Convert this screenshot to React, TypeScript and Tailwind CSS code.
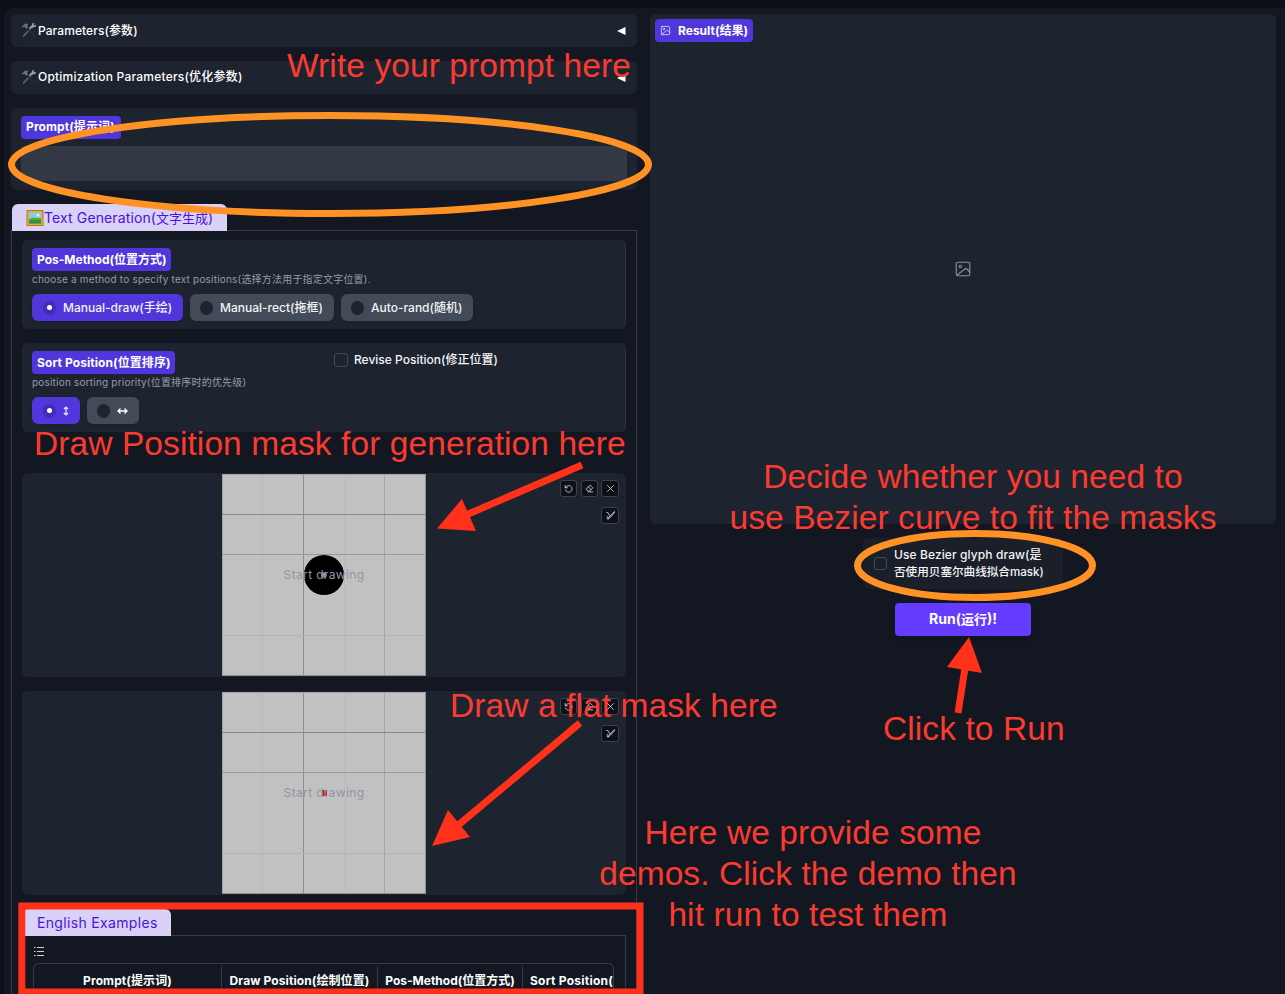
import React from "react";

const GRID_V: [number, string][] = [[0.5, "#a3a3a3"], [40.5, "#b8b8b8"], [81.5, "#8e8e8e"], [122.5, "#bbbbbb"], [162.5, "#a6a6a6"], [203.5, "#8f8f8f"]];
const GRID_H: [number, string][] = [[0.5, "#a3a3a3"], [40.5, "#8a8a8a"], [80.5, "#999999"], [161.5, "#b3b3b3"], [201.5, "#8a908e"]];

function Tools() {
  return (
    <svg width="16" height="16" viewBox="0 0 16 16" className="-mt-px block shrink-0">
      <path d="M2.500 14 9.500 6.600" stroke="#6a5f58" strokeWidth="1.700" strokeLinecap="round" />
      <path d="M6 6.400 13.600 13.500" stroke="#2b2b2d" strokeWidth="1.700" strokeLinecap="round" />
      <path d="M.8 4.400 4.600 1.600l3.200.3-1.600 1.200.6 2.300-1.600 1.400-2-2.200-1.200 1z" fill="#6d7377" />
      <path d="M8.700 7 7.800 6 10.800 3.200l.3-1.700L13.300.8 12.500 2.400l1 1 1.800-.8-.7 2.100-2 .5z" fill="#9aa0a3" />
    </svg>
  );
}

function Picture() {
  return (
    <svg width="18" height="18" viewBox="0 0 18 18" className="block shrink-0">
      <rect x=".5" y="1" width="17" height="16" fill="#b07d1a" />
      <rect x="1.500" y="2" width="15" height="14" fill="#e0ad3d" />
      <rect x="3" y="3.500" width="12" height="11" fill="#7fd0ea" />
      <path d="M3 10c3-2 6-1 12-1v5.500H3z" fill="#58a83c" />
      <path d="M3 12c4-2 8 0 12-1v3.500H3z" fill="#3b8d35" />
      <circle cx="12" cy="6" r="1.500" fill="#f7f3c0" />
    </svg>
  );
}

function ImageIcon({ className }: { className: string }) {
  return (
    <svg viewBox="0 0 24 24" fill="none" stroke="currentColor" strokeWidth="1.500" strokeLinecap="round" strokeLinejoin="round" className={className}>
      <rect x="3" y="3" width="18" height="18" rx="2" />
      <circle cx="8.500" cy="8.500" r="1.500" />
      <path d="M4 20 16 11l5 5" />
    </svg>
  );
}

function Accordion({ title, spacing }: { title: string; spacing: string }) {
  return (
    <div className="flex h-[33px] items-center rounded-md bg-[#1e242f] px-[10px]">
      <Tools />
      <span className={`ml-px text-[12px] font-medium text-white ${spacing}`}>{title}</span>
      <svg width="9" height="8" viewBox="0 0 9 8" className="mr-px ml-auto"><path d="M0 4 8.500 0v8z" fill="#fff" /></svg>
    </div>
  );
}

function Tag({ children, className }: { children: React.ReactNode; className: string }) {
  return <div className={`flex h-[23px] items-center rounded bg-[#4f37dc] pl-[5px] text-[12px] font-bold whitespace-nowrap text-white ${className}`}>{children}</div>;
}

function Radio({ on, children, className }: { on?: boolean; children: React.ReactNode; className: string }) {
  return (
    <div className={`flex h-[27px] items-center rounded-md text-[12px] font-medium whitespace-nowrap text-gray-100 shadow-sm ${on ? "bg-[#4f37dc] pl-[11px]" : "bg-[#424b57] pl-[10px]"} ${className}`}>
      <span className={`mr-[7px] flex h-[14px] w-[13px] shrink-0 items-center justify-center rounded-full ${on ? "bg-[#432bb8]" : "bg-[#1e242f]"}`}>
        {on && <span className="size-[5px] rounded-full bg-white" />}
      </span>
      {children}
    </div>
  );
}

function ToolButton({ children, className }: { children: React.ReactNode; className: string }) {
  return (
    <div className={`flex h-[17px] items-center justify-center rounded-[3px] border border-[#3b424e] bg-[#0d1017] text-[#d5d7db] ${className}`}>
      <svg width="9" height="9" viewBox="0 0 24 24" fill="none" stroke="currentColor" strokeWidth="2.200" strokeLinecap="round" strokeLinejoin="round">{children}</svg>
    </div>
  );
}

function Canvas({ brush }: { brush: "round" | "small" }) {
  return (
    <div className="relative flex h-[204px] justify-center rounded-md bg-[#1e242f]">
      <svg width="204" height="202" viewBox="0 0 204 202" className="mt-px block">
        <rect width="204" height="202" fill="#c1c1c1" />
        {GRID_V.map(([x, c]) => <path key={x} d={`M${x} 0V202`} stroke={c} />)}
        {GRID_H.map(([y, c]) => <path key={y} d={`M0 ${y}H204`} stroke={c} />)}
        {brush === "round" ? <circle cx="102" cy="101" r="20" fill="#000" /> : <rect x="100" y="98" width="5" height="6" fill="#c8201c" />}
        {brush === "round" && <circle cx="102" cy="101" r="2.800" fill="#8d8f96" />}
      </svg>
      <div className="absolute inset-0 flex items-center justify-center text-[12px] tracking-[0.35px] text-[#9095a3]">Start drawing</div>
      <div className="absolute top-[7px] right-[7px] flex flex-col items-end gap-[10px]">
        <div className="flex gap-[4px]">
          <ToolButton className="w-[17px]"><path d="M3 4v6h6" /><path d="M4 10a9 9 0 1 1 0 6" /></ToolButton>
          <ToolButton className="w-[17px]"><path d="M4 13 14 3l7 7-9 9H8l-5-5zM9 8l7 7M8 21h13" /></ToolButton>
          <ToolButton className="-ml-px w-[18px]"><path d="M4 4l16 16M20 4 4 20" /></ToolButton>
        </div>
        <ToolButton className="w-[18px]"><path d="M22 2 12 12l2 2 8-9zM11 13l-5 6 1 2 7-7M2 4h3l3 6 2 1M5 14l-2 3v4h4" /></ToolButton>
      </div>
    </div>
  );
}

function Note({ children, className }: { children: React.ReactNode; className: string }) {
  return <div className={`absolute text-[33.500px] leading-[41px] tracking-[0.09px] whitespace-nowrap text-[#fb3b30] [font-family:'Liberation_Sans',Arial,sans-serif] ${className}`}>{children}</div>;
}

export default function App() {
  return (
    <div className="relative h-[994px] w-[1285px] overflow-hidden bg-[#0d1017] pt-2 pl-1 [font-family:Inter,'Noto_Sans_CJK_SC',sans-serif]">
      <main className="flex h-[986px] gap-[13px] rounded-tl-lg bg-[#131721] pt-[6px] pl-[7px]">
        <section className="flex w-[626px] flex-col">
          <div className="flex flex-col gap-[14px]">
            <Accordion title="Parameters(参数)" spacing="tracking-[0.08px]" />
            <Accordion title="Optimization Parameters(优化参数)" spacing="-mt-[2px] tracking-[0.22px]" />
            <div className="h-[82px] rounded-md bg-[#1e242f] px-[10px] pt-2">
              <Tag className="w-[100px] pb-px tracking-[0.1px]">Prompt(提示词)</Tag>
              <div className="mt-[7px] h-[35px] rounded-sm bg-[#323844]" />
            </div>
          </div>
          <div className="z-10 mt-[14px] ml-px flex h-[27px] w-[215px] items-center rounded-t-md bg-[#d9d1f6] pl-[14px] text-[#4b12df]">
            <Picture />
            <span className="text-[14px] tracking-[0.12px] whitespace-nowrap">Text Generation(<span className="text-[13px] tracking-normal">文字生成</span>)</span>
          </div>
          <div className="-mt-px flex h-[764px] flex-col border border-b-0 border-[#353b47] px-[10px] pt-[9px]">
            <div className="h-[89px] rounded-md border-r border-[#2d3440] bg-[#1e242f] px-[10px] pt-2">
              <Tag className="w-[139px]">Pos-Method(位置方式)</Tag>
              <p className="mt-px h-[15px] text-[10px] leading-[14px] tracking-[0.2px] whitespace-nowrap text-[#969ba6]">choose a method to specify text positions(选择方法用于指定文字位置).</p>
              <div className="mt-[7px] flex gap-[7px]">
                <Radio on className="w-[151px]">Manual-draw(手绘)</Radio>
                <Radio className="w-[144px]">Manual-rect(拖框)</Radio>
                <Radio className="w-[132px]">Auto-rand(随机)</Radio>
              </div>
            </div>
            <div className="mt-[14px] flex h-[89px] rounded-md border-r border-[#2d3440] bg-[#1e242f] px-[10px] pt-2">
              <div className="w-[302px]">
                <Tag className="w-[143px] tracking-[0.08px]">Sort Position(位置排序)</Tag>
                <p className="mt-px h-[15px] text-[10px] leading-[14px] tracking-[0.2px] whitespace-nowrap text-[#969ba6]">position sorting priority(位置排序时的优先级)</p>
                <div className="mt-[7px] flex gap-[7px]">
                  <Radio on className="w-[48px]">
                    <svg width="6" height="10" viewBox="0 0 6 10" fill="none" stroke="#e8e6fa" strokeWidth="1.200"><path d="M3 1v8M1 3l2-2 2 2M1 7l2 2 2-2" /></svg>
                  </Radio>
                  <Radio className="w-[52px]">
                    <svg width="11" height="8" viewBox="0 0 11 8" fill="none" stroke="#fff" strokeWidth="1.300"><path d="M1 4h9M3.500 1.500 1 4l2.500 2.500M7.500 1.500 10 4 7.500 6.500" /></svg>
                  </Radio>
                </div>
              </div>
              <div className="flex h-[18px] items-center text-[12px] font-medium text-gray-100">
                <span className="mr-[6px] size-[14px] rounded-[3px] border border-[#434a56]" />
                <span className="whitespace-nowrap">Revise Position(修正位置)</span>
              </div>
            </div>
            <div className="mt-[41px] flex flex-col gap-[14px]">
              <Canvas brush="round" />
              <Canvas brush="small" />
            </div>
            <div className="z-10 mt-[14px] flex h-[27px] w-[149px] items-center rounded-t-md bg-[#d9d1f6] pl-[15px] text-[14px] tracking-[0.33px] whitespace-nowrap text-[#4b12df]">English Examples</div>
            <div className="-mt-px h-[59px] border border-b-0 border-[#353b47] pt-[11px] pr-[11px] pl-[10px]">
              <svg width="11" height="9" viewBox="0 0 11 9" stroke="#d0d2d6" className="block"><path d="M1 .5h1.500M1 4.500h1.500M1 8.500h1.500M4 .5h7M4 4.500h7M4 8.500h7" /></svg>
              <div className="mt-[7px] flex h-[31px] items-stretch overflow-hidden rounded-t-md border border-b-0 border-[#353b47] pt-[2px] text-[12px] leading-[30px] font-bold whitespace-nowrap text-white">
                <div className="w-[188px] shrink-0 border-r border-[#353b47] text-center tracking-[0.1px]">Prompt(提示词)</div>
                <div className="w-[156px] shrink-0 border-r border-[#353b47] text-center tracking-[0.1px]">Draw Position(绘制位置)</div>
                <div className="w-[145px] shrink-0 border-r border-[#353b47] text-center">Pos-Method(位置方式)</div>
                <div className="pl-[7px] tracking-[0.25px]">Sort Position(</div>
              </div>
            </div>
          </div>
        </section>

        <section className="flex w-[626px] flex-col items-center">
          <div className="relative flex h-[510px] w-full items-center justify-center rounded-md bg-[#1e242f]">
            <div className="absolute top-[5px] left-[5px] flex h-[23px] w-[98px] items-center rounded bg-[#4f37dc] pl-[5px] text-[12px] font-bold whitespace-nowrap text-white">
              <ImageIcon className="mr-[7px] size-[11px] shrink-0" />Result(结果)
            </div>
            <ImageIcon className="size-[18px] text-[#8b8f98]" />
          </div>
          <div className="mt-[14px] flex h-[51px] w-[200px] items-center rounded-md bg-[#1a1f29] pl-[11px] text-[12px] leading-[17px] font-medium text-gray-100">
            <span className="mr-[7px] size-[13px] shrink-0 rounded-[3px] border border-[#434a56]" />
            <span className="-mt-px whitespace-nowrap"><span className="tracking-[0.1px]">Use Bezier glyph draw(是</span><br /><span className="text-[11.600px]">否使用贝塞尔曲线拟合mask)</span></span>
          </div>
          <button className="mt-[14px] h-[33px] w-[136px] rounded-sm bg-[#643bff] pb-px text-[14px] font-bold text-white shadow-md">Run(<span className="text-[13px]">运行</span>)!</button>
        </section>
      </main>

      <svg width="1285" height="994" viewBox="0 0 1285 994" fill="none" className="pointer-events-none absolute inset-0 z-20">
        <g stroke="#ff9224" strokeWidth="7">
          <ellipse cx="330" cy="164.500" rx="318.500" ry="49" />
          <ellipse cx="975" cy="565.500" rx="117.500" ry="32" />
        </g>
        <rect x="21.800" y="906" width="618.200" height="86" stroke="#ff311b" strokeWidth="7" />
        <path d="M582 465 466 515M580 723 456 827M958 713 965 668" stroke="#ff311b" strokeWidth="7" />
        <path d="M437 528.500 462 499l14 32zM432 846l16-36 22 27zM969 637l-22 30 35 6z" fill="#ff311b" />
      </svg>
      <div className="pointer-events-none absolute inset-0 z-30">
        <Note className="top-[45px] left-[287px]">Write your prompt here</Note>
        <Note className="top-[423px] left-[34px]">Draw Position mask for generation here</Note>
        <Note className="top-[685px] left-[450px]">Draw a flat mask here</Note>
        <Note className="top-[456px] left-[723px] w-[500px] text-center">Decide whether you need to<br />use Bezier curve to fit the masks</Note>
        <Note className="top-[708px] left-[883px]">Click to Run</Note>
        <Note className="top-[812px] left-[558px] w-[500px] text-center">
          <span className="relative left-[5px]">Here we provide some</span><br />demos. Click the demo then<br />hit run to test them
        </Note>
      </div>
    </div>
  );
}
